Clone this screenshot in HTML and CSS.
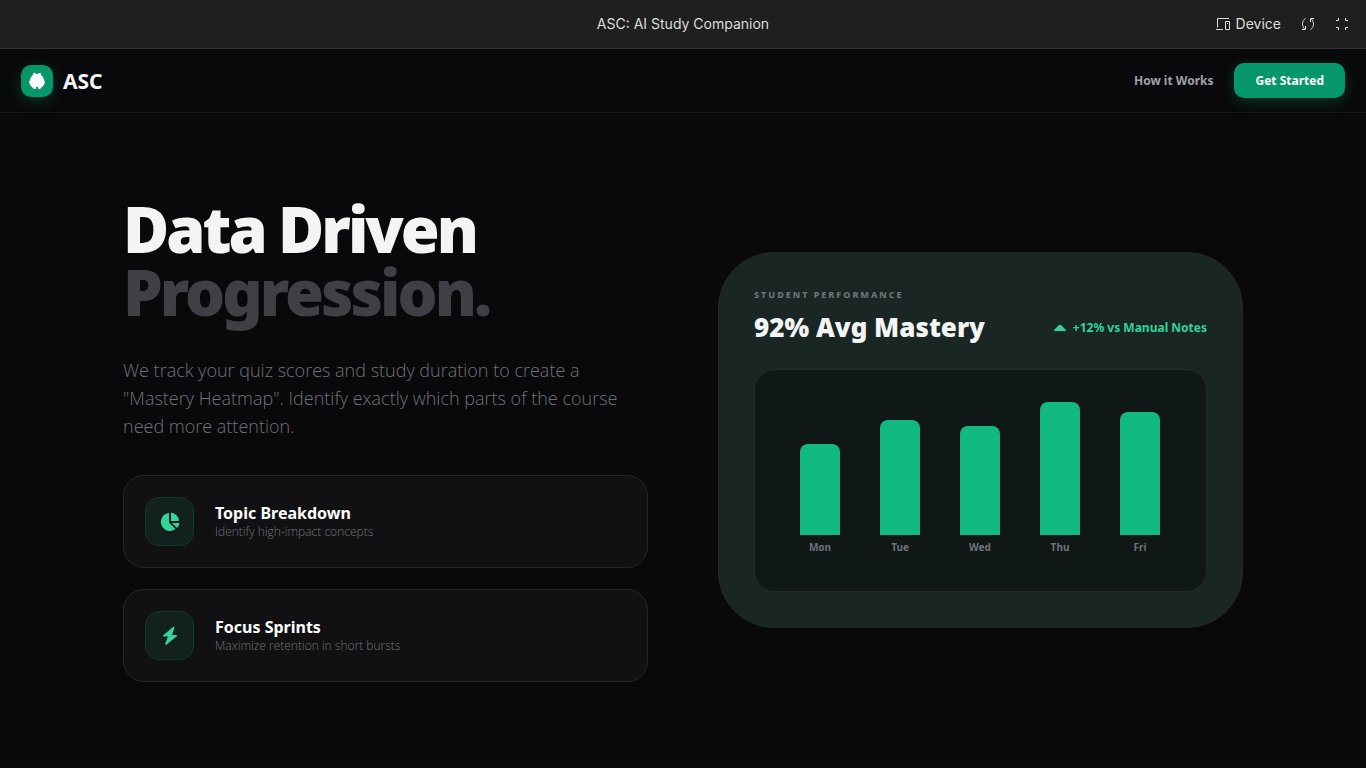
FILE: index.html
```html
<!DOCTYPE html>
<html lang="en">
<head>
    <meta charset="UTF-8">
    <meta name="viewport" content="width=device-width, initial-scale=1.0">
    <title>ASC: AI Study Companion</title>
    <link rel="stylesheet" href="styles.css">
</head>
<body>
    <div class="preview-bar">
        <span class="preview-title">ASC: AI Study Companion</span>
        <div class="preview-actions">
            <button type="button" class="preview-button">
                <svg width="14" height="14" viewBox="0 0 14 14" fill="none" stroke="currentColor" aria-hidden="true">
                    <path d="M13 1.500H1.500V10.500M0 12.500H7M9.500 4.500H13.500V12.500H9.500ZM11 6.500H12"/>
                </svg>
                Device
            </button>
            <button type="button" class="preview-button" aria-label="Reload">
                <svg width="14" height="14" viewBox="0 0 14 14" fill="none" stroke="currentColor" aria-hidden="true">
                    <path d="M4.500 1.500C1 3.500 0.500 8.500 3.500 12M1 12.500H4.500V9M9.500 12.500C13 10.500 13.500 5.500 10.500 2M13 1.500H9.500V5"/>
                </svg>
            </button>
            <button type="button" class="preview-button" aria-label="Exit full screen">
                <svg width="14" height="14" viewBox="0 0 14 14" fill="none" stroke="currentColor" aria-hidden="true">
                    <path d="M3.500 1V3.500H1M10.500 1V3.500H13M3.500 13V10.500H1M10.500 13V10.500H13"/>
                </svg>
            </button>
        </div>
    </div>

    <nav class="navbar">
        <a href="#" class="brand">
            <span class="brand-icon">
                <svg width="16" height="16" viewBox="0 0 16 16" fill="currentColor" aria-hidden="true">
                    <path d="M4 0H7V1H9V0H12V2L14 4L15 7L16 9L15 12L13 14L11 16H9V14H7V16H5L3 14L1 12L0 9L1 7L2 4L4 2Z"/>
                </svg>
            </span>
            ASC
        </a>
        <div class="nav-links">
            <a href="#how" class="nav-link">How it Works</a>
            <button type="button" class="start-button">Get Started</button>
        </div>
    </nav>

    <main class="hero" id="how">
        <section class="intro">
            <h1>Data Driven <span>Progression.</span></h1>
            <p class="lead">We track your quiz scores and study duration to create a "Mastery Heatmap". Identify exactly which parts of the course need more attention.</p>
            <div class="features">
                <div class="feature">
                    <div class="feature-icon">
                        <svg width="20" height="20" viewBox="0 0 20 20" fill="currentColor" aria-hidden="true">
                            <path d="M9 1V10.500L15.500 17A9 9 0 1 1 9 1ZM11 0.500A9 9 0 0 1 19 9H11ZM12 11H19.500A8.500 8.500 0 0 1 17 16Z"/>
                        </svg>
                    </div>
                    <div>
                        <h2>Topic Breakdown</h2>
                        <p>Identify high-impact concepts</p>
                    </div>
                </div>
                <div class="feature">
                    <div class="feature-icon">
                        <svg width="16" height="20" viewBox="0 0 16 20" fill="currentColor" aria-hidden="true">
                            <path d="M11.500 0.500L1 9.500V10.500H6L3 18L4 19L15 10V9H10L12.500 1.500Z"/>
                        </svg>
                    </div>
                    <div>
                        <h2>Focus Sprints</h2>
                        <p>Maximize retention in short bursts</p>
                    </div>
                </div>
            </div>
        </section>

        <section class="performance">
            <div class="performance-head">
                <div>
                    <p class="eyebrow">Student Performance</p>
                    <h2>92% Avg Mastery</h2>
                </div>
                <p class="trend">
                    <svg width="12" height="6" viewBox="0 0 12 6" fill="currentColor" aria-hidden="true">
                        <path d="M5 0H7L12 5V6H0V5Z"/>
                    </svg>
                    +12% vs Manual Notes
                </p>
            </div>
            <div class="chart">
                <div class="day"><div class="bar" style="height: 91px"></div>Mon</div>
                <div class="day"><div class="bar" style="height: 115px"></div>Tue</div>
                <div class="day"><div class="bar" style="height: 109px"></div>Wed</div>
                <div class="day"><div class="bar" style="height: 133px"></div>Thu</div>
                <div class="day"><div class="bar" style="height: 123px"></div>Fri</div>
            </div>
        </section>
    </main>
</body>
</html>
```
FILE: styles.css
```css
* {
    box-sizing: border-box;
}

body {
    margin: 0;
    min-height: 100vh;
    display: flex;
    flex-direction: column;
    background-color: #09090b;
    color: #f4f4f5;
    font-family: "Noto Sans", sans-serif;
    font-size: 14px;
}

h1,
h2,
p {
    margin: 0;
}

button {
    border: none;
    cursor: pointer;
    font-family: inherit;
}

a {
    text-decoration: none;
}

svg {
    display: block;
}

/* Preview bar */
.preview-bar {
    display: grid;
    grid-template-columns: 1fr auto 1fr;
    align-items: center;
    height: 49px;
    padding: 0 17px;
    background-color: #1f1f1f;
    border-bottom: 1px solid #333;
    color: #ddd;
    font-family: Inter, sans-serif;
    line-height: 16px;
}

.preview-title {
    grid-column: 2;
    font-size: 14px;
}

.preview-actions {
    display: flex;
    justify-content: flex-end;
    align-items: center;
    gap: 20px;
}

.preview-button {
    display: flex;
    align-items: center;
    gap: 6px;
    padding: 0;
    background: none;
    color: inherit;
    font-size: 14px;
    line-height: 16px;
}

/* Navigation */
.navbar {
    display: flex;
    justify-content: space-between;
    align-items: center;
    height: 64px;
    padding: 0 21px;
    border-bottom: 1px solid #18181b;
}

.brand {
    display: flex;
    align-items: center;
    gap: 10px;
    color: #f4f4f5;
    font-size: 21px;
    font-weight: 700;
}

.brand-icon {
    display: flex;
    justify-content: center;
    align-items: center;
    width: 32px;
    height: 32px;
    border-radius: 10px;
    background-color: #059669;
    box-shadow: 0 4px 14px rgba(5, 150, 105, 0.3);
    color: #fff;
}

.nav-links {
    display: flex;
    align-items: center;
    gap: 21px;
}

.nav-link {
    color: #a1a1aa;
    font-size: 12px;
    font-weight: 700;
}

.start-button {
    height: 35px;
    padding: 0 21px;
    border-radius: 10px;
    background-color: #059669;
    box-shadow: 0 4px 14px rgba(5, 150, 105, 0.3);
    color: #fff;
    font-size: 12px;
    font-weight: 700;
}

/* Hero */
.hero {
    flex: 1;
    display: grid;
    grid-template-columns: 1fr 1fr;
    align-items: center;
    gap: 70px;
    width: 100%;
    max-width: 1176px;
    margin: 0 auto;
    padding: 28px 28px 30px;
}

h1 {
    margin-bottom: 33px;
    font-size: 63px;
    font-weight: 900;
    line-height: 63px;
    letter-spacing: -3px;
}

h1 span {
    display: block;
    color: #3f3f46;
}

.lead {
    margin-bottom: 35px;
    color: #71717a;
    font-family: "Open Sans", sans-serif;
    font-size: 18px;
    font-weight: 300;
    line-height: 28px;
}

.features {
    display: grid;
    gap: 21px;
}

.feature {
    display: flex;
    align-items: center;
    gap: 21px;
    padding: 21px;
    border: 1px solid #27272a;
    border-radius: 21px;
    background-color: #111113;
}

.feature-icon {
    display: flex;
    justify-content: center;
    align-items: center;
    width: 49px;
    height: 49px;
    border: 1px solid #10392e;
    border-radius: 14px;
    background-color: #12211e;
    color: #34d399;
}

.feature h2 {
    color: #fff;
    font-size: 16px;
    font-weight: 700;
    line-height: 21px;
}

.feature p {
    color: #71717a;
    font-family: "Open Sans", sans-serif;
    font-size: 12px;
    font-weight: 300;
    line-height: 16px;
}

/* Performance card */
.performance {
    padding: 35px;
    border: 1px solid #27272a;
    border-radius: 56px;
    background-color: #192623;
}

.performance-head {
    display: flex;
    justify-content: space-between;
    align-items: flex-end;
    margin-bottom: 24px;
}

.eyebrow {
    margin-bottom: 7px;
    color: #71717a;
    font-size: 9px;
    font-weight: 800;
    line-height: 14px;
    letter-spacing: 2px;
    text-transform: uppercase;
}

.performance h2 {
    font-size: 26px;
    font-weight: 900;
    line-height: 36px;
}

.trend {
    display: flex;
    align-items: center;
    gap: 7px;
    padding-bottom: 8px;
    color: #34d399;
    font-size: 12px;
    font-weight: 700;
    line-height: 18px;
}

.chart {
    display: flex;
    justify-content: space-between;
    align-items: flex-end;
    height: 223px;
    padding: 28px 46px 37px 45px;
    border: 1px solid #27272a;
    border-radius: 21px;
    background-color: #101817;
}

.day {
    width: 40px;
    color: #71717a;
    font-size: 10px;
    font-weight: 700;
    line-height: 14px;
    text-align: center;
}

.bar {
    margin-bottom: 5px;
    border-radius: 8px 8px 0 0;
    background-color: #12ba82;
}
```
